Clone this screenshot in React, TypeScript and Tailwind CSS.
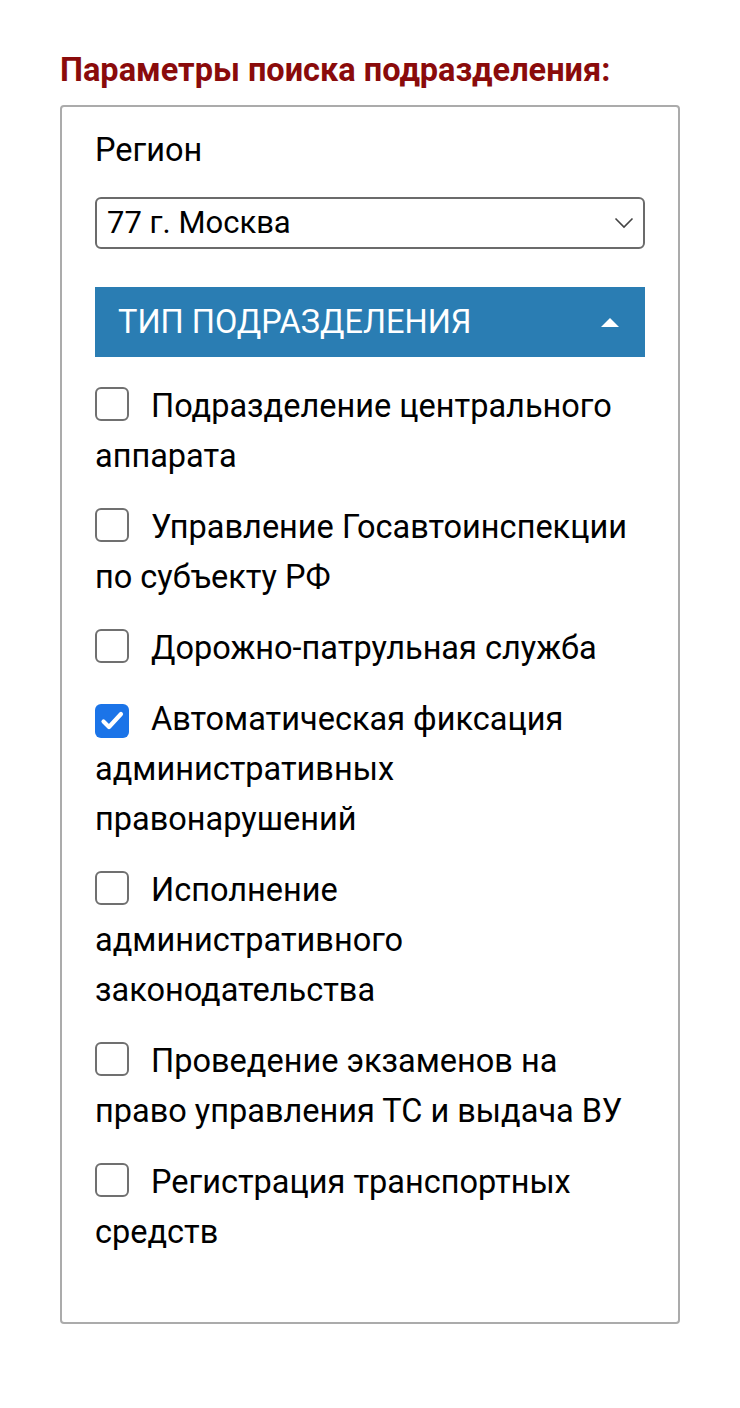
import { useState } from 'react'

const TYPES: { id: string; lines: string[] }[] = [
  { id: 'central', lines: ['Подразделение центрального', 'аппарата'] },
  { id: 'subject', lines: ['Управление Госавтоинспекции', 'по субъекту РФ'] },
  { id: 'dps', lines: ['Дорожно-патрульная служба'] },
  { id: 'auto', lines: ['Автоматическая фиксация', 'административных', 'правонарушений'] },
  { id: 'admin', lines: ['Исполнение', 'административного', 'законодательства'] },
  { id: 'exam', lines: ['Проведение экзаменов на', 'право управления ТС и выдача ВУ'] },
  { id: 'reg', lines: ['Регистрация транспортных', 'средств'] },
]

function Checkbox({ checked, onClick }: { checked: boolean; onClick: () => void }) {
  return (
    <span
      onClick={onClick}
      className={
        checked
          ? 'mr-[22px] inline-flex h-[34px] w-[34px] cursor-pointer items-center justify-center rounded-[6px] bg-[#1b74e8] align-[-4px]'
          : 'mr-[22px] inline-flex h-[34px] w-[34px] cursor-pointer items-center justify-center rounded-[6px] border-2 border-[#707070] bg-white align-[-4px]'
      }
    >
      {checked && (
        <svg width="26" height="26" viewBox="0 0 26 26" fill="none">
          <path d="M4.5 13.5l5.5 5.5L22 6" stroke="white" strokeWidth="4.2" strokeLinecap="round" strokeLinejoin="round" />
        </svg>
      )}
    </span>
  )
}

export default function App() {
  const [checked, setChecked] = useState<Record<string, boolean>>({ auto: true })
  const [open, setOpen] = useState(true)

  return (
    <div className="min-h-[1408px] bg-white px-[60px] pt-[48px] font-['Roboto',sans-serif] text-black">
      <h2 className="text-[32.5px] leading-[44px] font-bold text-[#8a0b0b]">Параметры поиска подразделения:</h2>

      <div className="mt-[13px] w-[620px] rounded-[4px] border-2 border-[#ababab] px-[33px] pt-[18px] pb-[65px]">
        <div className="text-[32.5px] leading-[50px]">Регион</div>

        <div className="relative mt-[22px] flex h-[52px] items-center rounded-[6px] border-2 border-[#6b6b6b] pl-[10px] pr-[40px]">
          <span className="text-[31px]">77 г. Москва</span>
          <svg className="absolute right-[9px] top-[18px]" width="20" height="12" viewBox="0 0 20 12" fill="none">
            <path d="M1.5 1.5L10 10L18.5 1.5" stroke="#444" strokeWidth="1.6" />
          </svg>
        </div>

        <button
          onClick={() => setOpen(!open)}
          className="mt-[38px] flex h-[70px] w-full items-center justify-between bg-[#2a7db3] pl-[23px] pr-[25px] text-left"
        >
          <span className="text-[32.5px] text-white">ТИП ПОДРАЗДЕЛЕНИЯ</span>
          <svg width="20" height="10" viewBox="0 0 20 10">
            <path d={open ? 'M1 10L10 1L19 10Z' : 'M1 0L10 9L19 0Z'} fill="white" />
          </svg>
        </button>

        {open && (
          <ul className="mt-[24px] flex flex-col gap-[21px]">
            {TYPES.map((t) => (
              <li key={t.id} className="text-[32.5px] leading-[50px]">
                <Checkbox
                  checked={!!checked[t.id]}
                  onClick={() => setChecked({ ...checked, [t.id]: !checked[t.id] })}
                />
                {t.lines.map((l, i) => (
                  <span key={i}>
                    {i > 0 && <br />}
                    {l}
                  </span>
                ))}
              </li>
            ))}
          </ul>
        )}
      </div>
    </div>
  )
}
